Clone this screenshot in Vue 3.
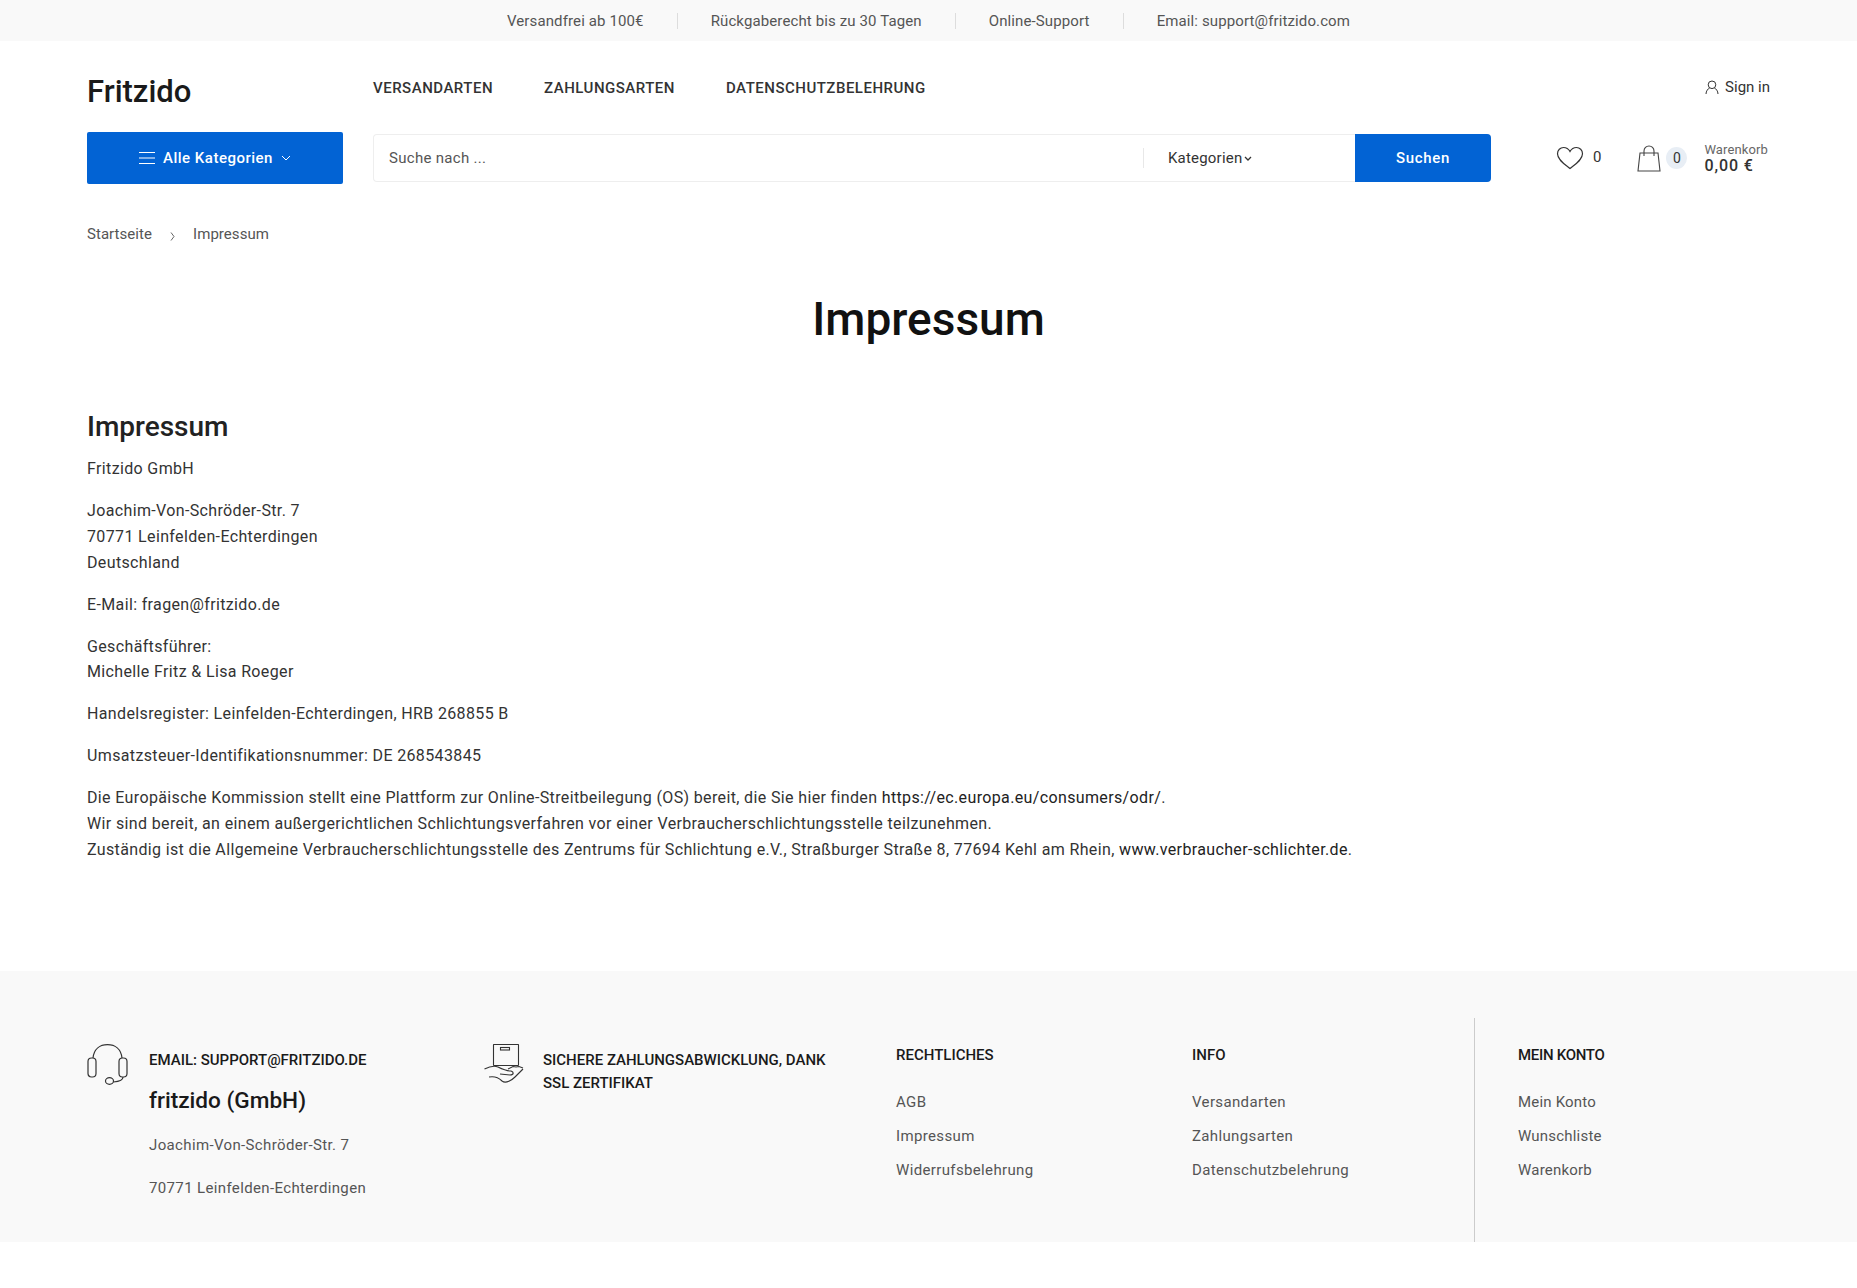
<template>
  <div class="page">
    <div class="topbar">
      <span v-for="(t, i) in topItems" :key="t" class="top-item" :class="{ first: i === 0 }">{{ t }}</span>
    </div>

    <header class="wrap header">
      <div class="row-one">
        <div class="logo">Fritzido</div>
        <nav class="nav">
          <a v-for="n in navItems" :key="n">{{ n }}</a>
        </nav>
        <div class="signin">
          <svg width="14" height="14" viewBox="0 0 14 14" fill="none" stroke="#333" stroke-width="1">
            <circle cx="7" cy="4.800" r="3.800" />
            <path d="M1 14c0-3 2-5.200 3.700-6.200M13 14c0-3-2-5.200-3.700-6.200" />
          </svg>
          Sign in
        </div>
      </div>
      <div class="row-two">
        <button class="all-cats">
          <svg width="16" height="12" viewBox="0 0 16 12" stroke="#fff" stroke-width="1"><path d="M0 .5h16M0 6h16M0 11.5h16" /></svg>
          <span>Alle Kategorien</span>
          <svg width="10" height="6" viewBox="0 0 10 6" fill="none" stroke="#fff" stroke-width="1"><path d="M1 1l4 4 4-4" /></svg>
        </button>
        <div class="search">
          <div class="search-input">Suche nach ...</div>
          <div class="search-cat">
            Kategorien
            <svg width="8" height="5" viewBox="0 0 8 5" fill="none" stroke="#333" stroke-width="1.3"><path d="M1 1l3 3 3-3" /></svg>
          </div>
          <button class="search-btn">Suchen</button>
        </div>
        <div class="wish">
          <svg width="28" height="24" viewBox="0 0 28 24" fill="none" stroke="#333" stroke-width="1.2">
            <path d="M14 22.500C9 18.500 1.500 14 1.500 7.800 1.500 4 4.300 1.500 7.500 1.500c2.800 0 5.100 1.500 6.500 4 1.400-2.500 3.700-4 6.500-4 3.200 0 6 2.500 6 6.300C26.500 14 19 18.500 14 22.500z" />
          </svg>
          <span>0</span>
        </div>
        <div class="cart">
          <svg width="24" height="27" viewBox="0 0 24 27" fill="none" stroke="#444" stroke-width="1.1">
            <path d="M3 8h18l2 18H1z" />
            <path d="M7 11V6a5 5 0 0 1 10 0v5" />
          </svg>
          <span class="cart-count">0</span>
          <div class="cart-text">
            <small>Warenkorb</small>
            <b>0,00 €</b>
          </div>
        </div>
      </div>
    </header>

    <div class="wrap crumbs">
      <span>Startseite</span>
      <svg class="sep" width="5" height="9" viewBox="0 0 5 9" fill="none" stroke="#555" stroke-width="0.9"><path d="M1 .5l3 4-3 4" /></svg>
      <span>Impressum</span>
    </div>

    <main class="wrap main">
      <h1>Impressum</h1>
      <h2>Impressum</h2>
      <p>Fritzido GmbH</p>
      <p>Joachim-Von-Schröder-Str. 7<br />70771 Leinfelden-Echterdingen<br />Deutschland</p>
      <p>E-Mail: fragen@fritzido.de</p>
      <p>Geschäftsführer:<br />Michelle Fritz &amp; Lisa Roeger</p>
      <p>Handelsregister: Leinfelden-Echterdingen, HRB 268855 B</p>
      <p>Umsatzsteuer-Identifikationsnummer: DE 268543845</p>
      <p>
        Die Europäische Kommission stellt eine Plattform zur Online-Streitbeilegung (OS) bereit, die Sie hier finden <a>https://ec.europa.eu/consumers/odr/</a>.<br />
        Wir sind bereit, an einem außergerichtlichen Schlichtungsverfahren vor einer Verbraucherschlichtungsstelle teilzunehmen.<br />
        Zuständig ist die Allgemeine Verbraucherschlichtungsstelle des Zentrums für Schlichtung e.V., Straßburger Straße 8, 77694 Kehl am Rhein, <a>www.verbraucher-schlichter.de</a>.
      </p>
    </main>

    <footer class="footer">
      <div class="wrap footer-grid">
        <div class="f-contact">
          <svg class="f-icon" width="42" height="42" viewBox="0 0 42 42" fill="none" stroke="#333" stroke-width="1.2">
            <path d="M6 14C7 5 13 .7 20.500 .7S34 5 35 14" />
            <rect x="1" y="14" width="8" height="19" rx="3.500" />
            <rect x="32" y="14" width="8" height="19" rx="3.500" />
            <path d="M36 33c0 3-3 4.500-9.500 5" />
            <ellipse cx="22.500" cy="37" rx="4" ry="3.300" />
          </svg>
          <div>
            <h4>EMAIL: SUPPORT@FRITZIDO.DE</h4>
            <div class="f-company">fritzido (GmbH)</div>
            <div class="f-address">Joachim-Von-Schröder-Str. 7</div>
            <div class="f-address next">70771 Leinfelden-Echterdingen</div>
          </div>
        </div>
        <div class="f-secure">
          <svg class="f-icon" width="42" height="42" viewBox="0 0 42 42" fill="none" stroke="#333" stroke-width="1.1">
            <rect x="9.500" y="0.500" width="25" height="21" rx="0.500" />
            <rect x="16.500" y="3.500" width="9" height="2.500" />
            <path d="M.5 25c4-2 8.500-4 13.500-2 4 2 8 4 13 4 3 1 3 4-1 4l-10-1" />
            <path d="M24 25l5-2.500 3 .5 3-.5 4 1.500" />
            <path d="M5 33c5-1 9 0 13 4 4 3 10-1 13-4l8-8" />
          </svg>
          <h4>SICHERE ZAHLUNGSABWICKLUNG, DANK SSL ZERTIFIKAT</h4>
        </div>
        <div v-for="c in linkCols" :key="c.title" class="f-col" :class="c.cls">
          <h5>{{ c.title }}</h5>
          <a v-for="l in c.links" :key="l">{{ l }}</a>
        </div>
      </div>
    </footer>
  </div>
</template>

<script setup>
const topItems = ['Versandfrei ab 100€', 'Rückgaberecht bis zu 30 Tagen', 'Online-Support', 'Email: support@fritzido.com']
const navItems = ['VERSANDARTEN', 'ZAHLUNGSARTEN', 'DATENSCHUTZBELEHRUNG']
const linkCols = [
  { title: 'RECHTLICHES', links: ['AGB', 'Impressum', 'Widerrufsbelehrung'], cls: 'c1' },
  { title: 'INFO', links: ['Versandarten', 'Zahlungsarten', 'Datenschutzbelehrung'], cls: 'c2' },
  { title: 'MEIN KONTO', links: ['Mein Konto', 'Wunschliste', 'Warenkorb'], cls: 'c3' }
]
</script>

<style>
html, body { background: #fff; }
</style>

<style scoped>
.page {
  font-family: Roboto, "Liberation Sans", sans-serif;
  font-size: 16px;
  color: #333;
  min-height: 1288px;
}
.wrap { margin: 0 87px; }

.topbar {
  height: 41px;
  background: #f9f9f9;
  display: flex;
  justify-content: center;
  align-items: center;
  font-size: 15px;
  letter-spacing: 0.12px;
  color: #555;
}
.top-item { padding: 0 33px; border-left: 1px solid #ddd; line-height: 16px; }
.top-item.first { border-left: 0; }

.row-one { display: flex; align-items: center; height: 91px; padding-top: 2px; box-sizing: border-box; }
.logo { width: 286px; font-size: 31px; font-weight: 500; color: #1a1a1a; padding-top: 8px; }
.nav { display: flex; gap: 51px; font-size: 15px; font-weight: 500; letter-spacing: 0.5px; color: #333; }
.signin { margin-left: auto; font-size: 15px; padding-bottom: 1px; display: flex; align-items: center; gap: 6px; }

.row-two { display: flex; align-items: center; height: 52px; }
.all-cats {
  width: 256px;
  height: 52px;
  background: #0263d4;
  color: #fff;
  border: 0;
  border-radius: 2px;
  font: 500 15px Roboto, sans-serif;
  letter-spacing: 0.5px;
  display: flex;
  align-items: center;
  justify-content: center;
  gap: 8px;
}
.search {
  margin-left: 30px;
  width: 1118px;
  height: 48px;
  display: flex;
  align-items: stretch;
  border-radius: 4px;
  box-sizing: border-box;
  box-shadow: inset 0 0 0 1px #eee;
}
.search-input { flex: 1; padding-left: 16px; line-height: 48px; font-size: 15px; letter-spacing: 0.3px; color: #555; }
.search-cat {
  width: 212px;
  box-sizing: border-box;
  padding-left: 25px;
  display: flex;
  align-items: center;
  gap: 2px;
  font-size: 15px;
  letter-spacing: 0.2px;
  position: relative;
}
.search-cat::before {
  content: '';
  position: absolute;
  left: 0;
  top: 14px;
  bottom: 14px;
  border-left: 1px solid #e8e8e8;
}
.search-btn {
  width: 136px;
  border: 0;
  background: #0263d4;
  color: #fff;
  font: 500 15px Roboto, sans-serif;
  letter-spacing: 0.7px;
  border-radius: 0 4px 4px 0;
}
.wish { margin-left: 65px; display: flex; align-items: center; gap: 9px; font-size: 15px; }
.wish span { padding-bottom: 3px; }
.cart { margin-left: 36px; display: flex; align-items: center; }
.cart-count {
  width: 21px;
  height: 22px;
  margin-left: 5px;
  border-radius: 50%;
  background: #e8eef5;
  display: flex;
  align-items: center;
  justify-content: center;
  font-size: 14px;
}
.cart-text { margin-left: 17px; display: flex; flex-direction: column; }
.cart-text small { font-size: 13px; line-height: 15px; letter-spacing: 0.1px; color: #666; }
.cart-text b { font-size: 16px; line-height: 18px; font-weight: 500; letter-spacing: 0.9px; }

.crumbs { margin-top: 40px; display: flex; align-items: center; gap: 18px; font-size: 15px; letter-spacing: 0.05px; color: #555; line-height: 20px; }
.sep { margin-top: 4px; }

.main { padding-top: 50px; height: 727px; box-sizing: border-box; letter-spacing: 0.36px; }
h1 { margin: 0; text-align: center; font-size: 46px; line-height: 50px; font-weight: 500; letter-spacing: 0; color: #111; }
h2 { margin: 67px 0 13px; font-size: 28px; line-height: 32px; font-weight: 500; letter-spacing: 0; color: #222; }
p { margin: 0 0 16px; line-height: 25.9px; }
p a { color: #222; }

.footer { height: 271px; background: #f9f9f9; }
.footer-grid { display: flex; height: 100%; padding-top: 47px; box-sizing: border-box; }
.f-contact { width: 397px; display: flex; gap: 20px; padding-top: 26px; box-sizing: border-box; }
.f-secure { width: 412px; display: flex; gap: 17px; padding-top: 26px; box-sizing: border-box; }
.f-secure h4 { width: 290px; }
h4 { margin: 0; padding-top: 5px; font-size: 15px; line-height: 23px; font-weight: 500; color: #1a1a1a; }
.f-company { margin-top: 14px; font-size: 22.6px; line-height: 30px; font-weight: 500; color: #1a1a1a; }
.f-address { margin-top: 18px; font-size: 15px; letter-spacing: 0.36px; line-height: 22px; color: #555; }
.f-address.next { margin-top: 21px; }
.f-col { display: flex; flex-direction: column; padding-top: 27px; }
.f-col h5 { margin: 0 0 20px; font-size: 15px; line-height: 20px; font-weight: 500; color: #1a1a1a; }
.f-col a { font-size: 15px; letter-spacing: 0.36px; line-height: 34px; color: #555; }
.c1 { width: 296px; }
.c2 { width: 282px; }
.c3 { padding-left: 43px; border-left: 1px solid #ccc; }
.c3 h5 { letter-spacing: -0.3px; }
.c3 a { letter-spacing: 0.2px; }
</style>
